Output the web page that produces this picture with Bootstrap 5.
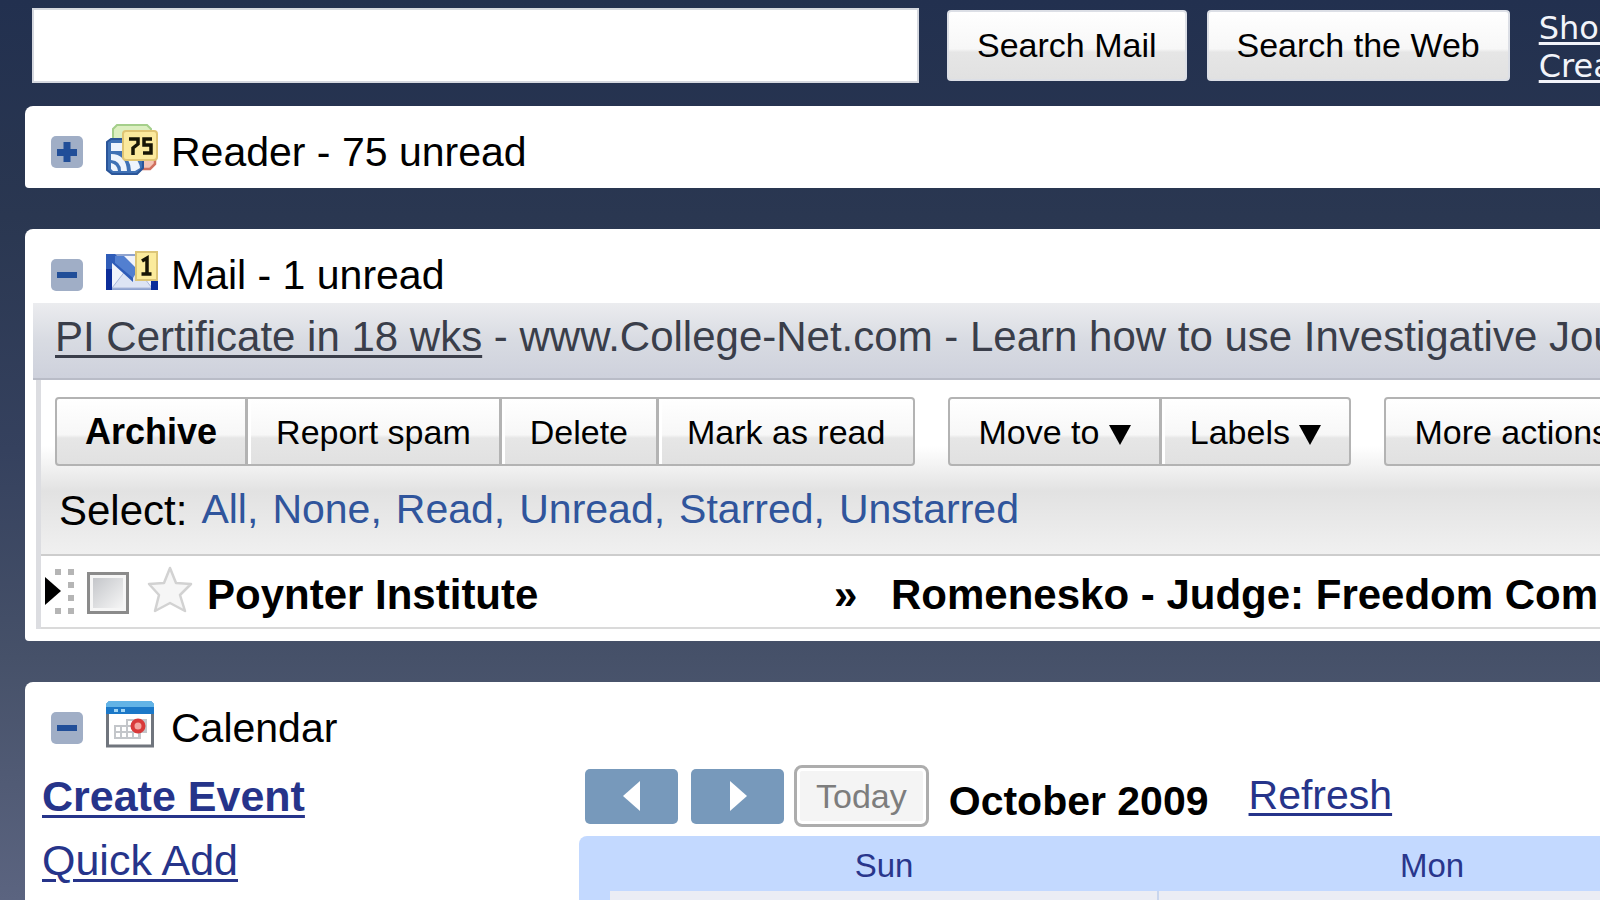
<!DOCTYPE html>
<html lang="en">
<head>
<meta charset="utf-8">
<meta name="viewport" content="width=device-width, initial-scale=1">
<title>Mail, Reader and Calendar</title>
<link href="https://cdn.jsdelivr.net/npm/bootstrap@5.3.0/dist/css/bootstrap.min.css" rel="stylesheet">
<style>
  body {
    font-family: "Liberation Sans", Arial, sans-serif;
    font-size: 41px;
    color: #000;
    background: linear-gradient(#22304f 0%, #2a3751 24%, #35415e 50%, #465169 73%, #5b6480 100%) #5b6480;
    overflow: hidden;
    white-space: nowrap;
  }
  .search-row { padding: 5px 0 21px 32px; }
  .search-box { width: 887px; height: 75px; border: 2px solid #d5d8df; border-radius: 0; font-size: 41px; }
  .btn-plain {
    --bs-btn-color: #000;
    --bs-btn-hover-color: #000;
    --bs-btn-font-size: 34px;
    --bs-btn-line-height: 40px;
    --bs-btn-padding-x: 28px;
    --bs-btn-padding-y: 0;
    --bs-btn-border-width: 2px;
    --bs-btn-border-color: #b3b3b3;
    --bs-btn-hover-border-color: #888;
    --bs-btn-border-radius: 4px;
    background: linear-gradient(#fff 0%, #f7f7f7 55%, #e6e6e6 60%, #e1e1e1 100%);
    height: 69px;
  }
  .btn-search { --bs-btn-border-color: #dcdfe6; height: 71px; }
  .btn-archive { --bs-btn-font-size: 36px; font-weight: bold; }
  .top-links { font: 32px/38px "DejaVu Sans", Verdana, sans-serif; padding: 4px 0 0 5px; }
  .top-links a { color: #f2f4fa; text-decoration-thickness: 3px; text-underline-offset: 3px; }
  .panel { background: #fff; margin-left: 25px; border-radius: 8px 0 0 4px; }
  .panel-gap { margin-bottom: 41px; }
  .panel-head { padding: 18px 0 0 26px; height: 74px; }
  .panel-head h2 { font-size: 41px; line-height: 46px; }
  .toggle { width: 32px; height: 32px; border: 0; border-radius: 5px; background: #a0aec6; }
  .toggle svg { display: block; }
  .app-icon { display: block; width: 52px; height: 56px; margin: 0 13px 0 23px; }
  .mail-panel { padding-bottom: 12px; }
  .ad-bar {
    margin-left: 8px; padding: 0 0 9px 22px; height: 77px; font-size: 42px; color: #3a3e4a;
    background: linear-gradient(#ebecef, #d8dbe2 50%, #ced1dc); border-bottom: 2px solid #b9bcc7;
  }
  .ad-bar a { color: inherit; text-decoration-thickness: 3px; text-underline-offset: 4px; }
  .mail-box { margin-left: 11px; border-left: 5px solid #dcdde1; }
  .mail-tools { padding: 17px 0 0 14px; background: linear-gradient(#fff 0%, #fff 38%, #e2e2e2 64%, #f0f0f0 100%); border-bottom: 2px solid #cdcdcd; }
  .tool-groups { gap: 33px; }
  .tool-groups .btn-plain + .btn-plain { box-shadow: inset 3px 0 0 #fff; }
  .select-line { height: 88px; padding-left: 4px; gap: 14px; }
  .select-line a { color: #30559c; text-decoration: none; }
  .select-label { font-size: 42px; }
  .mail-row { height: 73px; border-bottom: 2px solid #dadada; font-size: 42px; font-weight: bold; }
  .mail-row span { padding-top: 6px; }
  .mail-check {
    appearance: none; width: 42px; height: 42px; border: 3px solid #8b8b8b; padding: 3px; margin: 2px 18px 0 12px;
    background: linear-gradient(135deg, #c4c6ca, #f6f6f6) content-box, #f6f6f6;
  }
  .star-btn { background: none; border: 0; padding: 0; margin-right: 14px; }
  .grip { margin-left: 4px; }
  .sender { width: 627px; }
  .chevrons { width: 57px; }
  .blue-link, .blue-link:hover { color: #26348a; text-decoration-thickness: 3px; text-underline-offset: 4px; }
  .cal-side { width: 537px; padding-left: 17px; line-height: 64px; font-size: 43px; }
  .cal-bar { padding: 9px 0 9px 23px; height: 80px; }
  .cal-step { width: 93px; height: 55px; border: 0; border-radius: 5px; background: #7799bb; margin-right: 13px; padding: 0; }
  .btn-today {
    --bs-btn-padding-x: 19px; --bs-btn-border-width: 3px; --bs-btn-border-color: #adadad; --bs-btn-border-radius: 8px;
    --bs-btn-color: #7d7d7d; height: 62px; background: #f4f4f4; margin: 0 20px 0 -3px; box-shadow: inset 0 0 0 3px #fff;
  }
  .month-name { font-weight: bold; margin: 9px 40px 0 0; line-height: 46px; }
  .cal-frame { margin-left: 17px; padding-left: 31px; background: #c3d9ff; border-top-left-radius: 8px; overflow: hidden; }
  .cal-grid { table-layout: fixed; width: 1096px; height: 100%; margin: 0; }
  .cal-grid th { width: 548px; height: 55px; padding: 4px 0 0; text-align: center; font-size: 33px; line-height: 40px; font-weight: normal; color: #29368c; }
  .cal-grid td { padding: 0; background: #ebedf4; border-right: 2px solid #c9d6ee; }
</style>
</head>
<body class="d-flex flex-column min-vh-100">
<form class="search-row d-flex align-items-center" onsubmit="return false">
  <input class="search-box me-4 flex-shrink-0" type="text" aria-label="Search">
  <button class="btn btn-plain btn-search ms-1 me-3" type="submit">Search Mail</button>
  <button class="btn btn-plain btn-search ms-1 me-4" type="button">Search the Web</button>
  <div class="top-links d-flex flex-column">
    <a href="#options">Show search options</a>
    <a href="#filter">Create a filter</a>
  </div>
</form>

<section class="panel panel-gap pb-2">
  <div class="panel-head d-flex align-items-center">
    <button class="toggle p-0" type="button" aria-label="Expand Reader">
      <svg width="32" height="32" viewBox="0 0 32 32"><path d="M12.500 6h7v7h6.500v7h-6.500v6h-7v-6H6v-7h6.500z" fill="#214e98"/></svg>
    </button>
    <svg class="app-icon" viewBox="0 0 52 56">
      <path d="M11 1h30l4 4v20H7V5z" fill="#dcefc0" stroke="#a5cf8b" stroke-width="2"/>
      <path d="M36 28h13v12l-5 5h-8z" fill="#f5c6b8" stroke="#d0705f" stroke-width="2.500"/>
      <path d="M5 15h18l14 15v14l-6 6H6l-5-4V18z" fill="#3f71b5" stroke="#2a5599" stroke-width="2"/>
      <path d="M5 19h11v8H5zM19 19v9l-3-1M5 30q15 0 16 17h-6q0-10-10-11zM5 39q6 1 7 8H7l-2-2zM22 36h9q3 5 3 8l-5 3h-4q0-6-3-11z" fill="#eef4fd"/>
      <rect x="17" y="7" width="34" height="29" rx="3" fill="#fbe99d" stroke="#dfc473" stroke-width="2"/>
      <path d="M23 15h9v5l-5 4v7M46 15h-8v6h7v8h-8" fill="none" stroke="#171505" stroke-width="3.500"/>
    </svg>
    <h2 class="m-0 fw-normal">Reader - 75 unread</h2>
  </div>
</section>

<section class="panel panel-gap mail-panel">
  <div class="panel-head d-flex align-items-center">
    <button class="toggle p-0" type="button" aria-label="Collapse Mail">
      <svg width="32" height="32" viewBox="0 0 32 32"><path d="M6 13h20v6H6z" fill="#214e98"/></svg>
    </button>
    <svg class="app-icon" viewBox="0 0 52 56">
      <path d="M1 8h50v34H1z" fill="#f0f3fb" stroke="#8fa3cf" stroke-width="2"/>
      <path d="M6 41l14-18 6 6 6-6 14 18z" fill="#dde4f4" stroke="#aab8dc"/>
      <path d="M0 7h9l18 18v10L6 16v27H0z" fill="#2f5cb8"/>
      <path d="M9 9h9l14 14-5 8L9 16z" fill="#527fd0"/>
      <path d="M0 22h6v21H0zM45 34h7v9h-7z" fill="#0c2d99"/>
      <rect x="30" y="5" width="21" height="28" fill="#fbeb9c" stroke="#dcc577" stroke-width="2"/>
      <path d="M36 14l5-3v16M35.500 27h10" fill="none" stroke="#171505" stroke-width="3.500"/>
    </svg>
    <h2 class="m-0 fw-normal">Mail - 1 unread</h2>
  </div>
  <div class="ad-bar d-flex align-items-center"><a href="#ad">PI Certificate in 18 wks</a><span>&nbsp;- www.College-Net.com - Learn how to use Investigative Journalism</span></div>
  <div class="mail-box">
    <div class="mail-tools">
      <div class="tool-groups d-flex">
        <div class="btn-group flex-shrink-0">
          <button class="btn btn-plain btn-archive" type="button">Archive</button>
          <button class="btn btn-plain" type="button">Report spam</button>
          <button class="btn btn-plain" type="button">Delete</button>
          <button class="btn btn-plain" type="button">Mark as read</button>
        </div>
        <div class="btn-group flex-shrink-0">
          <button class="btn btn-plain" type="button">Move to <svg width="22" height="20" viewBox="0 0 22 20"><path d="M0 0h22L11 20z"/></svg></button>
          <button class="btn btn-plain" type="button">Labels <svg width="22" height="20" viewBox="0 0 22 20"><path d="M0 0h22L11 20z"/></svg></button>
        </div>
        <button class="btn btn-plain flex-shrink-0" type="button">More actions <svg width="22" height="20" viewBox="0 0 22 20"><path d="M0 0h22L11 20z"/></svg></button>
      </div>
      <div class="select-line d-flex align-items-center">
        <span class="select-label">Select:</span>
        <a href="#all">All,</a>
        <a href="#none">None,</a>
        <a href="#read">Read,</a>
        <a href="#unread">Unread,</a>
        <a href="#starred">Starred,</a>
        <a href="#unstarred">Unstarred</a>
      </div>
    </div>
    <div class="mail-row d-flex align-items-center">
      <svg class="grip flex-shrink-0" width="30" height="50" viewBox="0 0 30 50">
        <path d="M10 2h6v6h-6zM23 2h6v6h-6zM23 15h6v6h-6zM23 28h6v6h-6zM10 41h6v6h-6zM23 41h6v6h-6z" fill="#b5b5b5"/>
        <path d="M0 10l16 14L0 38z"/>
      </svg>
      <input class="mail-check flex-shrink-0" type="checkbox" aria-label="Select conversation">
      <button class="star-btn" type="button" aria-label="Star">
        <svg class="d-block" width="46" height="56" viewBox="0 0 46 56"><path d="M23 4l6 15 15 1-11 11 5 16-15-8-15 8 4-16L2 20l15-1z" fill="#f6f6f6" stroke="#d2d2d2" stroke-width="2.500" stroke-linejoin="round"/></svg>
      </button>
      <span class="sender flex-shrink-0">Poynter Institute</span>
      <span class="chevrons flex-shrink-0">»</span>
      <span>Romenesko - Judge: Freedom Communications</span>
    </div>
  </div>
</section>

<section class="panel rounded-bottom-0 flex-grow-1 d-flex flex-column">
  <div class="panel-head d-flex align-items-center">
    <button class="toggle p-0" type="button" aria-label="Collapse Calendar">
      <svg width="32" height="32" viewBox="0 0 32 32"><path d="M6 13h20v6H6z" fill="#214e98"/></svg>
    </button>
    <svg class="app-icon" viewBox="0 0 52 56">
      <path d="M1.500 9h45v37h-45z" fill="#fff" stroke="#70757d" stroke-width="3"/>
      <path d="M3 1h42l3 3v10H0V4z" fill="#1b78c8"/>
      <path d="M3 1h42l3 3v3H0V4z" fill="#62b3e6"/>
      <path d="M8 9h4v3H8zM15 9h4v3h-4z" fill="#9fd4f4"/>
      <path d="M8 25h12v-6h21v14h-6v6H8z" fill="#c3c6ca"/>
      <path d="M10 27h4v4h-4zM16 27h4v4h-4zM10 33h4v4h-4zM16 33h4v4h-4zM22 33h4v4h-4zM28 33h4v4h-4zM22 21h4v4h-4zM22 27h4v4h-4z" fill="#fff"/>
      <circle cx="32" cy="26" r="5.500" fill="#f3a7a1" stroke="#d93a3a" stroke-width="4"/>
    </svg>
    <h2 class="m-0 fw-normal">Calendar</h2>
  </div>
  <div class="d-flex flex-grow-1">
    <nav class="cal-side d-flex flex-column align-items-start flex-shrink-0 pt-2">
      <a class="blue-link fw-bold" href="#create">Create Event</a>
      <a class="blue-link" href="#quick">Quick Add</a>
    </nav>
    <div class="flex-grow-1 overflow-hidden d-flex flex-column">
      <div class="cal-bar d-flex align-items-center">
        <button class="cal-step" type="button" aria-label="Previous month"><svg class="d-block mx-auto" width="18" height="30" viewBox="0 0 18 30"><path d="M17 0v30L0 15z" fill="#fff"/></svg></button>
        <button class="cal-step" type="button" aria-label="Next month"><svg class="d-block mx-auto" width="18" height="30" viewBox="0 0 18 30"><path d="M1 0v30l17-15z" fill="#fff"/></svg></button>
        <button class="btn btn-plain btn-today" type="button">Today</button>
        <span class="month-name">October 2009</span>
        <a class="blue-link" href="#refresh">Refresh</a>
      </div>
      <div class="cal-frame flex-grow-1">
        <table class="cal-grid">
          <thead><tr><th scope="col">Sun</th><th scope="col">Mon</th></tr></thead>
          <tbody><tr><td></td><td></td></tr></tbody>
        </table>
      </div>
    </div>
  </div>
</section>
<script src="https://cdn.jsdelivr.net/npm/bootstrap@5.3.0/dist/js/bootstrap.bundle.min.js"></script>
</body>
</html>
